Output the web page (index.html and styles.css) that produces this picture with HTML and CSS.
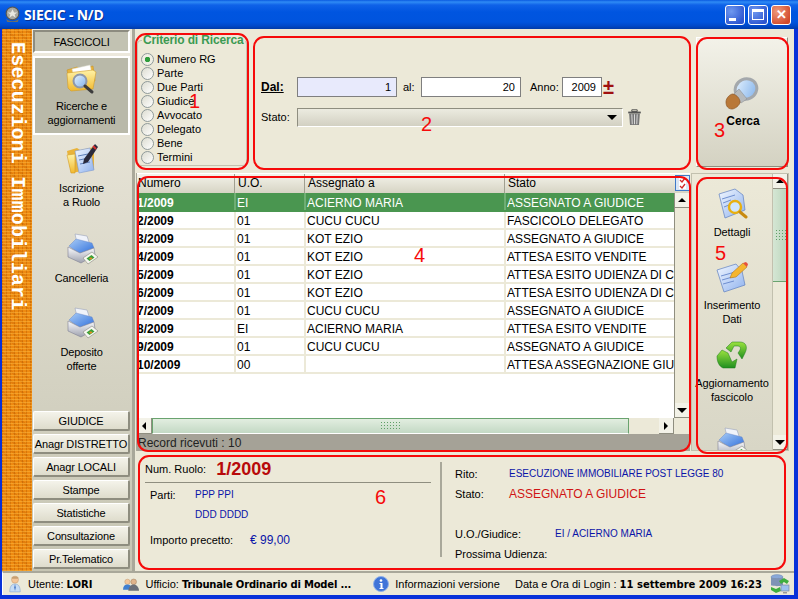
FILE: index.html
```html
<!DOCTYPE html>
<html lang="it">
<head>
<meta charset="utf-8">
<title>SIECIC - N/D</title>
<link rel="stylesheet" href="styles.css">
</head>
<body>
<svg class="defs" width="0" height="0" aria-hidden="true">
  <defs>
    <linearGradient id="gFolder" x1="0" y1="0" x2="0" y2="1"><stop offset="0" stop-color="#fff3a8"/><stop offset="1" stop-color="#f2b92e"/></linearGradient>
    <linearGradient id="gPaper" x1="0" y1="0" x2="1" y2="1"><stop offset="0" stop-color="#f2f7ff"/><stop offset="1" stop-color="#8fb2ee"/></linearGradient>
    <linearGradient id="gGlass" x1="0" y1="0" x2="1" y2="1"><stop offset="0" stop-color="#e8f4ff"/><stop offset="1" stop-color="#7fb0ea"/></linearGradient>
    <linearGradient id="gGreen" x1="0" y1="0" x2="0" y2="1"><stop offset="0" stop-color="#9be23f"/><stop offset="1" stop-color="#1f8f1f"/></linearGradient>
    <linearGradient id="gBody" x1="0" y1="0" x2="0" y2="1"><stop offset="0" stop-color="#fbfbfd"/><stop offset="1" stop-color="#9ea1ae"/></linearGradient>
    <linearGradient id="gCover" x1="0" y1="0" x2="1" y2="1"><stop offset="0" stop-color="#a9ccf6"/><stop offset="1" stop-color="#2f6fdc"/></linearGradient>
    <symbol id="iFolderSearch" viewBox="0 0 32 32">
      <path d="M1 7l10-3 3 2 13-3 2 15-24 7z" fill="#e9b33a" stroke="#c8962a" stroke-width=".6"/>
      <path d="M6 6l18-4 3 13-18 4z" fill="#fff" stroke="#d8d8c8" stroke-width=".5"/>
      <path d="M1 10l26-3 3 2-3 17-22 2-3-3z" fill="url(#gFolder)" stroke="#d29c28" stroke-width=".6"/>
      <circle cx="14" cy="18" r="6.5" fill="url(#gGlass)" stroke="#8f98a8" stroke-width="2"/>
      <path d="M19 23l7 6" stroke="#3c3c3c" stroke-width="3" stroke-linecap="round"/>
    </symbol>
    <symbol id="iFolderPen" viewBox="0 0 32 32">
      <path d="M1 8l10-3 3 2 14-3v22L5 30z" fill="#e9b33a"/>
      <path d="M1 12l8-1v19l-4 0z" fill="url(#gFolder)" stroke="#d29c28" stroke-width=".6"/>
      <path d="M9 8l15-3 4 22-15 3z" fill="url(#gPaper)" stroke="#7d9ad0" stroke-width=".6"/>
      <path d="M12 13l10-2M13 17l10-2M14 21l10-2" stroke="#5f7fb8" stroke-width="1"/>
      <path d="M29 1l3 3-10 15-5 2 1-5z" fill="#2a2a3c"/>
      <path d="M27 3l3 3" stroke="#d83030" stroke-width="2"/>
    </symbol>
    <symbol id="iPrinter" viewBox="0 0 32 32">
      <path d="M9 1l12 2 3 9-13-2z" fill="#f0f3fa" stroke="#9aa2b8" stroke-width=".6"/>
      <path d="M3 13l7-7 16 4 2 5-14 6z" fill="url(#gCover)" stroke="#5f7fc0" stroke-width=".4"/>
      <path d="M2 14l12 6 14-5 1 7-14 8-13-6z" fill="url(#gBody)" stroke="#7f8294" stroke-width=".6"/>
      <path d="M17 25l9-6 6 5-10 7z" fill="#f6f6f0" stroke="#77776d" stroke-width=".5"/>
      <path d="M20.500 25.500l5-3.500 3 2.500-5 3.500z" fill="#3aa13a"/><path d="M23 25.500l2-1.300 1.500 1.200-2 1.300z" fill="#e88a20"/>
    </symbol>
    <symbol id="iDetails" viewBox="0 0 32 32">
      <path d="M3 6l16-5 8 6 2 15-20 8z" fill="url(#gPaper)" stroke="#5f7fc0" stroke-width=".7"/>
      <path d="M6 11l13-4M7 15l8-3M8 19l5-2" stroke="#6f8fd0" stroke-width="1"/>
      <circle cx="19" cy="19" r="6" fill="#cfe6ff" stroke="#e8b010" stroke-width="2.4"/>
      <path d="M24 24l6 5" stroke="#c88a10" stroke-width="3" stroke-linecap="round"/>
    </symbol>
    <symbol id="iEdit" viewBox="0 0 32 32">
      <path d="M1 9l19-6 6 7 3 14-21 7z" fill="url(#gPaper)" stroke="#5f7fc0" stroke-width=".7"/>
      <path d="M5 15l14-4M6 19l14-4M7 23l11-3" stroke="#6f8fd0" stroke-width="1"/>
      <path d="M14 17l2-5L27 2l4 4-11 10z" fill="#f5b52e" stroke="#a86c10" stroke-width=".5"/>
      <path d="M27 2l4 4 1-3-2-2z" fill="#e8503a"/>
    </symbol>
    <symbol id="iRefresh" viewBox="0 0 32 32">
      <path d="M16 3h8c6 0 8 5 5 11l-3 6-4-6 2-3c1-2 0-4-2-4h-4l-3 6-5-4z" fill="url(#gGreen)" stroke="#1a7a1a" stroke-width=".5"/>
      <path d="M1 17l5-6 6 3 4 9 5-3-2 9H7c-4-2-6-6-6-12z" fill="url(#gGreen)" stroke="#1a7a1a" stroke-width=".5"/>
    </symbol>
    <symbol id="iSearchBig" viewBox="0 0 34 34">
      <ellipse cx="21" cy="13" rx="11" ry="10" transform="rotate(-25 21 13)" fill="url(#gGlass)" stroke="#a4a8ac" stroke-width="3"/>
      <path d="M8 19l6-6 8 10-6 4z" fill="#b6babd" stroke="#85888c" stroke-width=".5"/>
      <path d="M1 26c0-4 4-8 7-8 4 1 7 5 7 8s-5 7-8 7c-4 0-6-3-6-7z" fill="#b97838" stroke="#8b5524" stroke-width=".7"/>
    </symbol>
    <symbol id="iUser" viewBox="0 0 16 20">
      <circle cx="8" cy="5" r="4" fill="#f3c69a" stroke="#c09060" stroke-width=".5"/>
      <path d="M4 3c1-2 7-2 8 0l-1 1H5z" fill="#c8a070"/>
      <path d="M2 19c0-6 2-9 6-9s6 3 6 9z" fill="#c6dcf5" stroke="#7f9fc8" stroke-width=".6"/>
      <path d="M8 10l-1 4 1 4 1-4z" fill="#4f7fc8"/>
    </symbol>
    <symbol id="iOffice" viewBox="0 0 18 16">
      <circle cx="5" cy="5" r="3" fill="#f3c69a" stroke="#b08050" stroke-width=".4"/>
      <path d="M0 14c0-4 2-6 5-6s5 2 5 6z" fill="#3f7fd0"/>
      <circle cx="12" cy="5" r="3.2" fill="#e0b48c" stroke="#806040" stroke-width=".4"/>
      <path d="M6 15c0-4 3-7 6-7s6 3 6 7z" fill="#6b6f78"/>
    </symbol>
    <symbol id="iNet" viewBox="0 0 20 20">
      <ellipse cx="7" cy="3" rx="6" ry="2.4" fill="#8aa8d8" stroke="#5a78a8" stroke-width=".4"/>
      <path d="M1 3v8c0 1.500 12 1.500 12 0V3c0 1.500-12 1.500-12 0z" fill="#7f93b5"/>
      <path d="M9 7l5-3 5 3-2 3-3-2-3 2z" fill="#3fae3f"/>
      <path d="M1 13l5 2 4-2 1 4-5 2-5-3z" fill="#3fae3f"/>
      <rect x="11" y="11" width="8" height="6" fill="#9cc0ee" stroke="#7a8aa0" stroke-width=".7"/>
      <path d="M13 18h4v1.500h-4z" fill="#9a9a9a"/>
    </symbol>
  </defs>
</svg>

<div class="window">
  <header class="titlebar">
    <svg class="emblem" viewBox="0 0 16 16"><circle cx="8" cy="7" r="6" fill="#a8a8a0" stroke="#55554f"/><path d="M8 3l1.500 3h3L10 8l1 3-3-2-3 2 1-3-2.500-2h3z" fill="#e8e8e0"/><path d="M2 12c2 3 10 3 12 0l-1 3H3z" fill="#6f6f66"/></svg>
    <span class="title-text">SIECIC - N/D</span>
    <div class="caption-buttons">
      <span class="cap"><i class="cap-min"></i></span>
      <span class="cap"><i class="cap-max"></i></span>
      <span class="cap cap-close">&#10005;</span>
    </div>
  </header>

  <div class="frame">
    <div class="workspace">
      <div class="brand"><span>Esecuzioni Immobiliari</span></div>

      <nav class="sidebar">
        <div class="side-title">FASCICOLI</div>
        <div class="side-item side-item-active">
          <svg class="icon32"><use href="#iFolderSearch"/></svg>
          <span>Ricerche e<br>aggiornamenti</span>
        </div>
        <div class="side-item side-item-2">
          <svg class="icon32"><use href="#iFolderPen"/></svg>
          <span>Iscrizione<br>a Ruolo</span>
        </div>
        <div class="side-item side-item-3">
          <svg class="icon32"><use href="#iPrinter"/></svg>
          <span>Cancelleria</span>
        </div>
        <div class="side-item side-item-4">
          <svg class="icon32"><use href="#iPrinter"/></svg>
          <span>Deposito<br>offerte</span>
        </div>
        <div class="side-buttons">
          <button class="side-btn">GIUDICE</button>
          <button class="side-btn">Anagr DISTRETTO</button>
          <button class="side-btn">Anagr LOCALI</button>
          <button class="side-btn">Stampe</button>
          <button class="side-btn">Statistiche</button>
          <button class="side-btn">Consultazione</button>
          <button class="side-btn">Pr.Telematico</button>
        </div>
      </nav>

      <main class="main">
        <section class="top-row">
          <fieldset class="criteria">
            <legend>Criterio di Ricerca</legend>
            <div class="radio radio-on"><i></i>Numero RG</div>
            <div class="radio"><i></i>Parte</div>
            <div class="radio"><i></i>Due Parti</div>
            <div class="radio"><i></i>Giudice</div>
            <div class="radio"><i></i>Avvocato</div>
            <div class="radio"><i></i>Delegato</div>
            <div class="radio"><i></i>Bene</div>
            <div class="radio"><i></i>Termini</div>
          </fieldset>

          <div class="search">
            <div class="search-row">
              <span class="lbl lbl-dal">Dal:</span>
              <span class="field field-from">1</span>
              <span class="lbl lbl-al">al:</span>
              <span class="field field-to">20</span>
              <span class="lbl lbl-anno">Anno:</span>
              <span class="field field-year">2009</span>
              <span class="plusminus">&#177;</span>
            </div>
            <div class="search-row">
              <span class="lbl lbl-dal-2">Stato:</span>
              <span class="select"><i class="arrow-down"></i></span>
              <svg class="trash" viewBox="0 0 16 20"><path d="M5 2h6v2H5z" fill="none" stroke="#444" stroke-width="1"/><path d="M1 4h14v2H1z" fill="#555"/><path d="M2 6h12l-1 13H3z" fill="#777"/><path d="M5 7l.5 11M8 7v11M11 7l-.5 11" stroke="#e4e4e4" stroke-width="1"/></svg>
            </div>
          </div>

          <button class="search-btn">
            <svg class="icon-big"><use href="#iSearchBig"/></svg>
            <b>Cerca</b>
          </button>
        </section>

        <section class="mid-row">
          <div class="grid">
            <div class="grid-head">
              <span class="h c1">Numero</span><span class="h c2">U.O.</span><span class="h c3">Assegnato a</span><span class="h c4">Stato</span>
              <svg class="head-check" viewBox="0 0 15 16"><rect x=".5" y=".5" width="14" height="15" fill="#dbe6f5" stroke="#3f79c8"/><path d="M4 2h7v12H4z" fill="#fff"/><path d="M5 5l2 2 3-4M5 11l2 2 3-4" fill="none" stroke="#d02828" stroke-width="1.300"/></svg>
            </div>
            <div class="grid-body">
              <div class="grid-rows">
                <table class="records">
                  <tbody>
                    <tr class="selected"><td class="c1">1/2009</td><td class="c2">EI</td><td class="c3">ACIERNO MARIA</td><td class="c4"><div>ASSEGNATO A GIUDICE</div></td></tr>
                    <tr><td class="c1">2/2009</td><td class="c2">01</td><td class="c3">CUCU CUCU</td><td class="c4"><div>FASCICOLO DELEGATO</div></td></tr>
                    <tr><td class="c1">3/2009</td><td class="c2">01</td><td class="c3">KOT EZIO</td><td class="c4"><div>ASSEGNATO A GIUDICE</div></td></tr>
                    <tr><td class="c1">4/2009</td><td class="c2">01</td><td class="c3">KOT EZIO</td><td class="c4"><div>ATTESA ESITO VENDITE</div></td></tr>
                    <tr><td class="c1">5/2009</td><td class="c2">01</td><td class="c3">KOT EZIO</td><td class="c4"><div>ATTESA ESITO UDIENZA DI CONVOCAZIONE</div></td></tr>
                    <tr><td class="c1">6/2009</td><td class="c2">01</td><td class="c3">KOT EZIO</td><td class="c4"><div>ATTESA ESITO UDIENZA DI CONVOCAZIONE</div></td></tr>
                    <tr><td class="c1">7/2009</td><td class="c2">01</td><td class="c3">CUCU CUCU</td><td class="c4"><div>ASSEGNATO A GIUDICE</div></td></tr>
                    <tr><td class="c1">8/2009</td><td class="c2">EI</td><td class="c3">ACIERNO MARIA</td><td class="c4"><div>ATTESA ESITO VENDITE</div></td></tr>
                    <tr><td class="c1">9/2009</td><td class="c2">01</td><td class="c3">CUCU CUCU</td><td class="c4"><div>ASSEGNATO A GIUDICE</div></td></tr>
                    <tr><td class="c1">10/2009</td><td class="c2">00</td><td class="c3"></td><td class="c4"><div>ATTESA ASSEGNAZIONE GIUDICE</div></td></tr>
                  </tbody>
                </table>
              </div>
              <div class="vscroll">
                <span class="sb-btn"><i class="arrow-up"></i></span>
                <span class="sb-track"></span>
                <span class="sb-btn"><i class="arrow-down"></i></span>
              </div>
            </div>
            <div class="hscroll">
              <span class="sb-btn sb-btn-h"><i class="arrow-left"></i></span>
              <span class="h-thumb"><i class="grip"></i></span>
              <span class="sb-track"></span>
              <span class="sb-btn sb-btn-h"><i class="arrow-right"></i></span>
              <span class="corner"></span>
            </div>
            <div class="record-bar">Record ricevuti : 10</div>
          </div>

          <aside class="actions">
            <div class="action-list">
              <div class="action action-1"><svg class="icon32"><use href="#iDetails"/></svg><span>Dettagli</span></div>
              <div class="action action-2"><svg class="icon32"><use href="#iEdit"/></svg><span>Inserimento<br>Dati</span></div>
              <div class="action action-3"><svg class="icon32"><use href="#iRefresh"/></svg><span>Aggiornamento<br>fascicolo</span></div>
              <div class="action action-4"><svg class="icon32"><use href="#iPrinter"/></svg></div>
            </div>
            <div class="vscroll vscroll-actions">
              <span class="sb-btn"><i class="arrow-up"></i></span>
              <span class="v-thumb"><i class="grip"></i></span>
              <span class="sb-track"></span>
              <span class="sb-btn"><i class="arrow-down"></i></span>
            </div>
          </aside>
        </section>

        <section class="details">
          <div class="det-left">
            <div class="det-ruolo"><span>Num. Ruolo:</span><strong>1/2009</strong></div>
            <div class="det-parti">
              <span class="det-lab">Parti:</span>
              <span class="blue">PPP PPI</span>
              <span class="blue det-second">DDD DDDD</span>
            </div>
            <div class="det-importo"><span class="det-imp-lab">Importo precetto:</span><span class="blue-money">&#8364; 99,00</span></div>
          </div>
          <div class="det-right">
            <div class="det-line det-rito"><span>Rito:</span><span class="blue">ESECUZIONE IMMOBILIARE POST LEGGE 80</span></div>
            <div class="det-line det-stato"><span>Stato:</span><span class="red">ASSEGNATO A GIUDICE</span></div>
            <div class="det-line det-uo"><span>U.O./Giudice:</span><span class="blue">EI / ACIERNO MARIA</span></div>
            <div class="det-line det-pross"><span>Prossima Udienza:</span></div>
          </div>
        </section>
      </main>
    </div>

    <footer class="statusbar">
      <svg class="st-user"><use href="#iUser"/></svg>
      <span class="st st-utente">Utente: <b>LORI</b></span>
      <svg class="st-office"><use href="#iOffice"/></svg>
      <span class="st st-ufficio">Ufficio: <b>Tribunale Ordinario di Model ...</b></span>
      <svg class="st-info" viewBox="0 0 16 16"><circle cx="8" cy="8" r="7.500" fill="#3f74d8" stroke="#8fb0e8"/><circle cx="8" cy="4.500" r="1.300" fill="#fff"/><path d="M6.500 7h3v5h1v1h-4v-1h1V8h-1z" fill="#fff"/></svg>
      <span class="st st-ver">Informazioni versione</span>
      <span class="st st-login">Data e Ora di Login : <b>11 settembre 2009 16:23</b></span>
      <svg class="st-net"><use href="#iNet"/></svg>
    </footer>
  </div>

  <div class="marks">
    <div class="mark mark-1"></div><span class="num num-1">1</span>
    <div class="mark mark-2"></div><span class="num num-2">2</span>
    <div class="mark mark-3"></div><span class="num num-3">3</span>
    <div class="mark mark-4"></div><span class="num num-4">4</span>
    <div class="mark mark-5"></div><span class="num num-5">5</span>
    <div class="mark mark-6"></div><span class="num num-6">6</span>
  </div>
</div>
</body>
</html>
```

FILE: styles.css
```css
* { box-sizing: border-box; }
html, body { margin: 0; padding: 0; background: #0a3fc4; overflow: hidden; }
.defs { position: absolute; }
body, button { font-family: "Liberation Sans", Arial, sans-serif; font-size: 11px; color: #000; }

.window { position: relative; width: 798px; height: 599px; display: flex; flex-direction: column; background: #0831d9; overflow: hidden; }

.titlebar {
  height: 29px; flex: none; display: flex; align-items: center; padding: 0 7px 0 4px;
  background: linear-gradient(#0a5ae0 0, #2f8bf5 2px, #0f62e8 5px, #0055e0 12px, #0054de 22px, #0048c8 26px, #003aa8 29px);
}
.emblem { width: 17px; height: 17px; margin-right: 3px; }
.title-text { font-family: "Open Sans", sans-serif; font-weight: 700; font-size: 14px; letter-spacing: -.2px; color: #fff; text-shadow: 1px 1px 0 #0a2f90; }
.caption-buttons { margin-left: auto; display: flex; gap: 3px; }
.cap {
  width: 20px; height: 20px; border: 1px solid #fff; border-radius: 3px; position: relative; display: flex; align-items: center; justify-content: center;
  background: radial-gradient(circle at 30% 30%, #6f98ef, #2c55d0 80%); color: #fff; font-size: 13px; font-weight: 700;
}
.cap-close { background: radial-gradient(circle at 30% 30%, #ef9a7c, #d2492a 80%); }
.cap-min { width: 7px; height: 3px; background: #fff; margin: 9px 6px 0 0; }
.cap-max { width: 12px; height: 11px; border: 1px solid #fff; border-top-width: 3px; }

.frame { flex: 1; min-height: 0; margin: 0 4px 4px 2px; display: flex; flex-direction: column; background: #ece9d8; }
.workspace { flex: 1; min-height: 0; display: flex; }

.brand {
  width: 30px; flex: none; height: 100%; padding-top: 13px; display: flex; justify-content: center;
  background-color: #ee8a10;
  background-image:
    repeating-linear-gradient(0deg, rgba(255,190,70,.45) 0 1px, transparent 1px 3px),
    repeating-linear-gradient(90deg, rgba(170,80,0,.35) 0 1px, transparent 1px 4px),
    repeating-linear-gradient(45deg, rgba(190,90,0,.25) 0 2px, transparent 2px 7px);
}
.brand span { writing-mode: vertical-rl; font-family: "Liberation Mono", monospace; font-weight: 700; font-size: 20px; letter-spacing: .2px; color: #fff; line-height: 30px; white-space: nowrap; }

.sidebar {
  width: 100px; flex: none; display: flex; flex-direction: column; align-items: center;
  padding: 1px 2px 0 1px; background: linear-gradient(#eeeade, #c6c5b3); letter-spacing: -.15px;
}
.side-title {
  width: 97px; height: 23px; flex: none; display: flex; align-items: center; justify-content: center;
  background: #c2c2b2; border: 2px solid; border-color: #8d8c80 #fff #fff #8d8c80;
}
.side-item { display: flex; flex-direction: column; align-items: center; text-align: center; line-height: 14px; flex: none; width: 97px; }
.icon32 { width: 32px; height: 32px; flex: none; }
.side-item-active { height: 79px; margin-top: 3px; padding-top: 5px; background: #b9b9a9; border: 2px solid #fff; }
.side-item-active span { margin-top: 4px; }
.side-item-2 { margin-top: 8px; }
.side-item-2 span, .side-item-3 span, .side-item-4 span { margin-top: 6px; }
.side-item-3 { margin-top: 24px; }
.side-item-4 { margin-top: 22px; }
.side-buttons { margin-top: auto; margin-bottom: 2px; display: flex; flex-direction: column; gap: 3px; }
.side-btn {
  width: 97px; height: 20px; padding: 0; white-space: nowrap; border: 0; border-top: 1px solid #fff; border-left: 1px solid #fff;
  border-right: 2px solid #8e8d7f; border-bottom: 2px solid #8e8d7f; border-radius: 2px; letter-spacing: -.15px;
  background: linear-gradient(#f4f3ea, #dedccc);
}

.main { flex: 1; min-width: 0; padding: 3px 0 0 1px; border-left: 3px solid #a9a89a; display: flex; flex-direction: column; background: #ece9d8; }

.top-row { height: 138px; flex: none; display: flex; align-items: flex-start; }
.criteria {
  margin: 2px 0 0 1px; padding: 6px 0 0 3px; width: 110px; height: 132px; border: 1px solid #c4c2b0; border-radius: 4px; min-width: 0;
}
.criteria legend { padding: 0 1px; margin-left: 1px; font-weight: 700; color: #3c9a52; font-size: 12px; letter-spacing: -.15px; line-height: 12px; white-space: nowrap; }
.radio { height: 14px; display: flex; align-items: center; white-space: nowrap; }
.radio i { width: 13px; height: 13px; border-radius: 50%; border: 1px solid #8f9a9a; background: linear-gradient(135deg, #dcdcd0, #fff); margin-right: 3px; flex: none; }
.radio-on i { background: radial-gradient(circle, #2f9d3d 0 2.500px, #efefe4 3px); }

.search { margin: 4px 0 0 6px; width: 437px; height: 132px; display: flex; flex-direction: column; justify-content: center; gap: 10px; padding-left: 8px; }
.search-row { display: flex; align-items: center; height: 20px; }
.lbl { white-space: nowrap; }
.lbl-dal { width: 36px; font-weight: 700; text-decoration: underline; font-size: 12px; }
.lbl-dal-2 { width: 36px; }
.lbl-al { width: 24px; padding-left: 6px; }
.lbl-anno { width: 41px; padding-left: 9px; }
.field { height: 20px; border: 1px solid #7f7f7f; background: #fff; text-align: right; padding: 3px 5px 0 0; }
.field-from { width: 100px; background: #e8eafc; }
.field-to { width: 100px; }
.field-year { width: 40px; }
.plusminus { color: #a01010; font-weight: 700; font-size: 20px; line-height: 20px; margin-left: 1px; width: 11px; }
.select {
  width: 326px; height: 19px; display: flex; align-items: center; justify-content: flex-end; padding-right: 5px;
  border: 1px solid #8f8e80; border-right-color: #fff; border-bottom-color: #fff; background: linear-gradient(#ecebe0, #d2d0c2);
}
.trash { width: 15px; height: 18px; margin-left: 4px; flex: none; }

.search-btn {
  margin: 5px 0 0 6px; width: 92px; height: 130px; border: 0; border-right: 1px solid #8f8e80; border-bottom: 1px solid #8f8e80; border-top: 1px solid #fff; border-left: 1px solid #fff;
  background: linear-gradient(#f3f2e9, #d4d2c2); display: flex; flex-direction: column; align-items: center; padding: 38px 0 0 0;
}
.search-btn b { font-size: 12px; margin-top: 4px; margin-left: 2px; }
.icon-big { width: 34px; height: 34px; flex: none; }

.mid-row { height: 278px; flex: none; margin-top: 3px; display: flex; gap: 1px; }
.grid { width: 554px; flex: none; display: flex; flex-direction: column; border-left: 1px solid #a9a89a; font-size: 12px; }
.grid-head { height: 20px; flex: none; display: flex; position: relative; background: linear-gradient(#f4f3ea, #d6d4c4); border-top: 1px solid #fff; }
.h { padding-left: 3px; line-height: 18px; border-right: 1px solid #a09f90; flex: none; }
.h.c1 { width: 98px; padding-left: 1px; }
.h.c2 { width: 70px; }
.h.c3 { width: 200px; }
.h.c4 { width: 170px; border-right: 0; }
.head-check { width: 15px; height: 16px; margin-top: 1px; flex: none; }
.grid-body { height: 225px; flex: none; display: flex; }
.grid-rows { flex: 1; min-width: 0; background: #fff; overflow: hidden; border-right: 1px solid #8f8e80; }
.records { border-collapse: collapse; table-layout: fixed; width: 538px; }
.records td { height: 18px; padding: 2px 0 0 1px; line-height: 14px; border-right: 2px solid #ece9d8; border-bottom: 2px solid #ece9d8; white-space: nowrap; overflow: hidden; }
.records td.c1 { width: 98px; padding-left: 0; font-weight: 700; }
.records td.c2 { width: 70px; }
.records td.c3 { width: 200px; }
.records td.c4 { border-right: 0; }
.records td.c4 div { overflow: hidden; }
.records tr.selected td { background: #4a9650; color: #fff; border-color: #4a9650; border-right-color: #6fae74; }

.vscroll { width: 15px; flex: none; display: flex; flex-direction: column; background: #ece9d8; }
.sb-track { flex: 1; background: #ece9d8; }
.sb-btn { width: 15px; height: 15px; flex: none; display: flex; align-items: center; justify-content: center; background: #f3f2e8; border-right: 1px solid #8f8e80; border-bottom: 1px solid #8f8e80; }
.arrow-up { width: 0; height: 0; border: 4px solid transparent; border-top: 0; border-bottom: 4px solid #000; }
.arrow-down { width: 0; height: 0; border: 5px solid transparent; border-bottom: 0; border-top: 5px solid #000; }
.arrow-left { width: 0; height: 0; border: 4px solid transparent; border-left: 0; border-right: 4px solid #000; }
.arrow-right { width: 0; height: 0; border: 4px solid transparent; border-right: 0; border-left: 4px solid #000; }
.hscroll { height: 16px; flex: none; display: flex; background: #ece9d8; }
.sb-btn-h { height: 16px; }
.h-thumb { width: 477px; flex: none; display: flex; align-items: center; justify-content: center; border: 1px solid #6aa36f; border-bottom-color: #fff; background: linear-gradient(#e2eee0, #c3d9c4); }
.corner { width: 16px; flex: none; background: #ece9d8; }
.grip { width: 22px; height: 10px; background-image: radial-gradient(circle, #5f9f66 0.7px, transparent 1px); background-size: 3px 3px; }
.record-bar { flex: 1; background: #a5a297; color: #222; padding: 1px 0 0 1px; line-height: 16px; }

.actions { width: 98px; flex: none; display: flex; background: linear-gradient(#ece9d8, #d8d6c6); border: 1px solid #c2c0ae; }
.action-list { flex: 1; min-width: 0; overflow: hidden; display: flex; flex-direction: column; align-items: center; }
.action { display: flex; flex-direction: column; align-items: center; text-align: center; line-height: 14px; white-space: nowrap; flex: none; letter-spacing: -.1px; }
.action span { margin-top: 5px; }
.action-1 { margin-top: 14px; }
.action-2 { margin-top: 22px; }
.action-3 { margin-top: 13px; }
.action-4 { margin-top: 23px; }
.vscroll-actions { width: 15px; border-left: 1px solid #c2c0ae; box-sizing: content-box; }
.v-thumb { height: 93px; flex: none; display: flex; align-items: flex-end; justify-content: center; padding-bottom: 40px; background: linear-gradient(90deg, #d5e6d4, #b9d4ba); border-bottom: 1px solid #6aa36f; }
.v-thumb .grip { width: 11px; height: 12px; }

.details { margin: 5px 0 0 1px; width: 648px; height: 112px; flex: none; display: flex; padding: 3px 0 0 8px; }
.det-left { width: 297px; flex: none; height: 95px; }
.det-ruolo { display: flex; align-items: center; width: 286px; height: 20px; gap: 10px; padding-bottom: 3px; border-bottom: 1px solid #8f8e80; box-sizing: content-box; }
.det-ruolo strong { color: #b80a0a; font-size: 18px; line-height: 20px; }
.det-parti { display: grid; grid-template-columns: 45px auto; row-gap: 6px; margin: 5px 0 0 5px; line-height: 14px; }
.det-second { grid-column: 2; }
.det-importo { display: flex; margin: 11px 0 0 5px; line-height: 14px; }
.det-imp-lab { width: 100px; }
.blue { color: #0a14a8; font-size: 10px; }
.blue-money { color: #0a14a8; font-size: 12px; }
.red { color: #d01414; font-size: 12px; }
.det-right { border-left: 2px solid #a9a89a; height: 95px; margin: 3px 0 0 -2px; padding-left: 13px; flex: 1; }
.det-line { display: flex; line-height: 14px; white-space: nowrap; }
.det-rito { margin-top: 5px; }
.det-rito span:first-child, .det-stato span:first-child { width: 54px; }
.det-stato { margin-top: 6px; }
.det-uo { margin-top: 26px; }
.det-uo span:first-child { width: 100px; }
.det-pross { margin-top: 6px; }

.statusbar { height: 24px; flex: none; display: flex; align-items: center; background: #ece9d8; border-top: 2px solid #a9a89a; border-left: 1px solid #fff; padding-left: 5px; }
.st { white-space: nowrap; flex: none; }
.st b { font-family: "DejaVu Sans", sans-serif; font-size: 10px; }
.st-ufficio b { letter-spacing: -.2px; }
.st-user { width: 14px; height: 18px; margin-right: 6px; flex: none; }
.st-office { width: 16px; height: 15px; margin: 0 6px 0 31px; flex: none; }
.st-info { width: 16px; height: 16px; margin: 0 6px 0 22px; flex: none; }
.st-login { margin-left: auto; }
.st-net { width: 20px; height: 20px; margin: 0 4px 0 8px; flex: none; }

.marks { position: absolute; left: 0; top: 0; width: 798px; height: 599px; pointer-events: none; }
.mark { position: absolute; border: 2px solid #f60a0a; border-radius: 11px; }
.mark-1 { left: 135px; top: 33px; width: 114px; height: 137px; }
.mark-2 { left: 253px; top: 36px; width: 438px; height: 134px; }
.mark-3 { left: 696px; top: 37px; width: 93px; height: 133px; }
.mark-4 { left: 137px; top: 176px; width: 554px; height: 276px; }
.mark-5 { left: 696px; top: 177px; width: 92px; height: 277px; }
.mark-6 { left: 138px; top: 455px; width: 648px; height: 115px; }
.num { position: absolute; color: #f60a0a; font-size: 20px; line-height: 20px; font-family: "Liberation Sans", sans-serif; }
.num-1 { left: 189px; top: 91px; }
.num-2 { left: 421px; top: 114px; }
.num-3 { left: 714px; top: 120px; }
.num-4 { left: 414px; top: 245px; }
.num-5 { left: 715px; top: 243px; }
.num-6 { left: 375px; top: 487px; }
```
